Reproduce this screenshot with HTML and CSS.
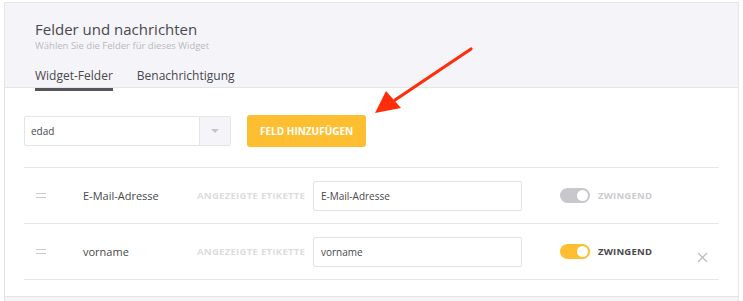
FILE: index.html
```html
<!DOCTYPE html>
<html>
<head>
    <title>Felder und nachrichten</title>
    <meta name="viewport" content="width=device-width, initial-scale=1.0">
    <link rel="stylesheet" href="styles.css">
</head>
<body>
    <div class='card'>
        <div class='card-head'>
            <h1 class='title'>Felder und nachrichten</h1>
            <div class='subtitle'>Wählen Sie die Felder für dieses Widget</div>
            <div class='tabs'>
                <div class='tab tab_active'>Widget-Felder</div>
                <div class='tab'>Benachrichtigung</div>
            </div>
        </div>

        <div class='card-body'>
            <div class='add-row'>
                <div class='select'>
                    <div class='select-value'>edad</div>
                    <div class='select-arrow'><span class='caret'></span></div>
                </div>
                <button class='button button_primary'>FELD HINZUFÜGEN</button>
            </div>

            <div class='field-list'>
                <div class='field-row'>
                    <div class='handle'></div>
                    <div class='field-name'>E-Mail-Adresse</div>
                    <div class='field-label'>ANGEZEIGTE ETIKETTE</div>
                    <input class='field-input' value='E-Mail-Adresse'>
                    <div class='required'>
                        <span class='switch'></span>
                        <span class='required-text'>ZWINGEND</span>
                    </div>
                    <div class='remove'></div>
                </div>
                <div class='field-row'>
                    <div class='handle'></div>
                    <div class='field-name'>vorname</div>
                    <div class='field-label'>ANGEZEIGTE ETIKETTE</div>
                    <input class='field-input' value='vorname'>
                    <div class='required required_on'>
                        <span class='switch'></span>
                        <span class='required-text'>ZWINGEND</span>
                    </div>
                    <div class='remove'>
                        <svg width='11' height='11' viewBox='0 0 11 11'><path d='M1 1L10 10M10 1L1 10' stroke='#b9b9be' stroke-width='1.2' fill='none'/></svg>
                    </div>
                </div>
            </div>
        </div>
        <div class='card-foot'></div>

        <svg class='pointer' width='110' height='75' viewBox='0 0 110 75'>
            <path d='M98 3L22 54' stroke='#ff2d0a' stroke-width='3.2' stroke-linecap='round' fill='none'/>
            <path d='M2 67L13 45L28 62Z' fill='#ff2d0a'/>
        </svg>
    </div>
</body>
</html>
```

FILE: styles.css
```css
html {
    font-family: 'Open Sans', sans-serif;
}
body {
    margin: 0;
    padding: 2px 4px 0 4px;
    background: #fff;
}
.card {
    position: relative;
    border: 1px solid #e4e4e9;
    border-bottom: 0;
}
.card-head {
    background: #f5f5f9;
    padding: 15px 0 0 30px;
    height: 69px;
    border-bottom: 1px solid #e4e4e9;
}
.title {
    margin: 0;
    font-size: 15px;
    font-weight: 400;
    color: #48484d;
    line-height: 22px;
}
.subtitle {
    font-size: 9.5px;
    color: #b9b9c0;
    line-height: 12px;
}
.tabs {
    display: flex;
    gap: 24px;
    margin-top: 14px;
}
.tab {
    font-size: 12px;
    color: #48484d;
    line-height: 20px;
    padding-bottom: 2px;
}
.tab_active {
    border-bottom: 3px solid #55555b;
}
.card-body {
    padding: 27px 19px 16px 19px;
}
.add-row {
    display: flex;
    align-items: center;
    gap: 16px;
    padding-bottom: 20px;
    border-bottom: 1px solid #e4e4e9;
}
.select {
    display: flex;
    width: 205px;
    height: 28px;
    border: 1px solid #e4e4e9;
    border-radius: 2px;
}
.select-value {
    flex: 1;
    font-size: 10px;
    color: #48484d;
    line-height: 28px;
    padding-left: 6px;
}
.select-arrow {
    width: 30px;
    background: #f5f5f9;
    border-left: 1px solid #e4e4e9;
    display: flex;
    align-items: center;
    justify-content: center;
}
.caret {
    border-left: 4px solid transparent;
    border-right: 4px solid transparent;
    border-top: 4px solid #c4c4ca;
}
.button {
    margin: 0;
    border: 0;
    border-radius: 3px;
    height: 32px;
    padding: 0 13px;
    font-family: 'Open Sans', sans-serif;
    font-weight: 700;
    font-size: 10px;
    color: #fff;
    cursor: pointer;
}
.button_primary {
    background-color: #fdbf31;
}
.field-row {
    display: flex;
    align-items: center;
    height: 55px;
    border-bottom: 1px solid #e4e4e9;
}
.handle {
    width: 10px;
    height: 3px;
    border-top: 1px solid #c9c9ce;
    border-bottom: 1px solid #c9c9ce;
    margin: 0 37px 0 12px;
}
.field-name {
    width: 114px;
    font-size: 11px;
    color: #48484d;
}
.field-label {
    width: 116px;
    font-size: 9.5px;
    font-weight: 700;
    letter-spacing: 0.3px;
    color: #dcdce0;
}
.field-input {
    box-sizing: border-box;
    width: 209px;
    height: 30px;
    border: 1px solid #e1e1e6;
    border-radius: 2px;
    padding: 0 7px;
    font-family: 'Open Sans', sans-serif;
    font-size: 10px;
    color: #48484d;
    outline: none;
}
.required {
    display: flex;
    align-items: center;
    gap: 8px;
    margin-left: 38px;
    width: 128px;
}
.switch {
    position: relative;
    width: 30px;
    height: 15px;
    border-radius: 8px;
    background: #c8c8cc;
}
.switch::after {
    content: '';
    position: absolute;
    right: 2px;
    top: 2px;
    width: 11px;
    height: 11px;
    border-radius: 50%;
    background: #fff;
}
.required-text {
    font-size: 9.5px;
    font-weight: 700;
    letter-spacing: 0.2px;
    color: #cbcbd0;
}
.required_on .switch {
    background: #fdbf31;
}
.required_on .required-text {
    color: #48484d;
}
.remove {
    width: 11px;
    height: 11px;
    margin-left: 9px;
}
.card-foot {
    height: 16px;
    background: #f5f5f9;
    border-top: 1px solid #e4e4e9;
}
.pointer {
    position: absolute;
    left: 368px;
    top: 43px;
}
```
